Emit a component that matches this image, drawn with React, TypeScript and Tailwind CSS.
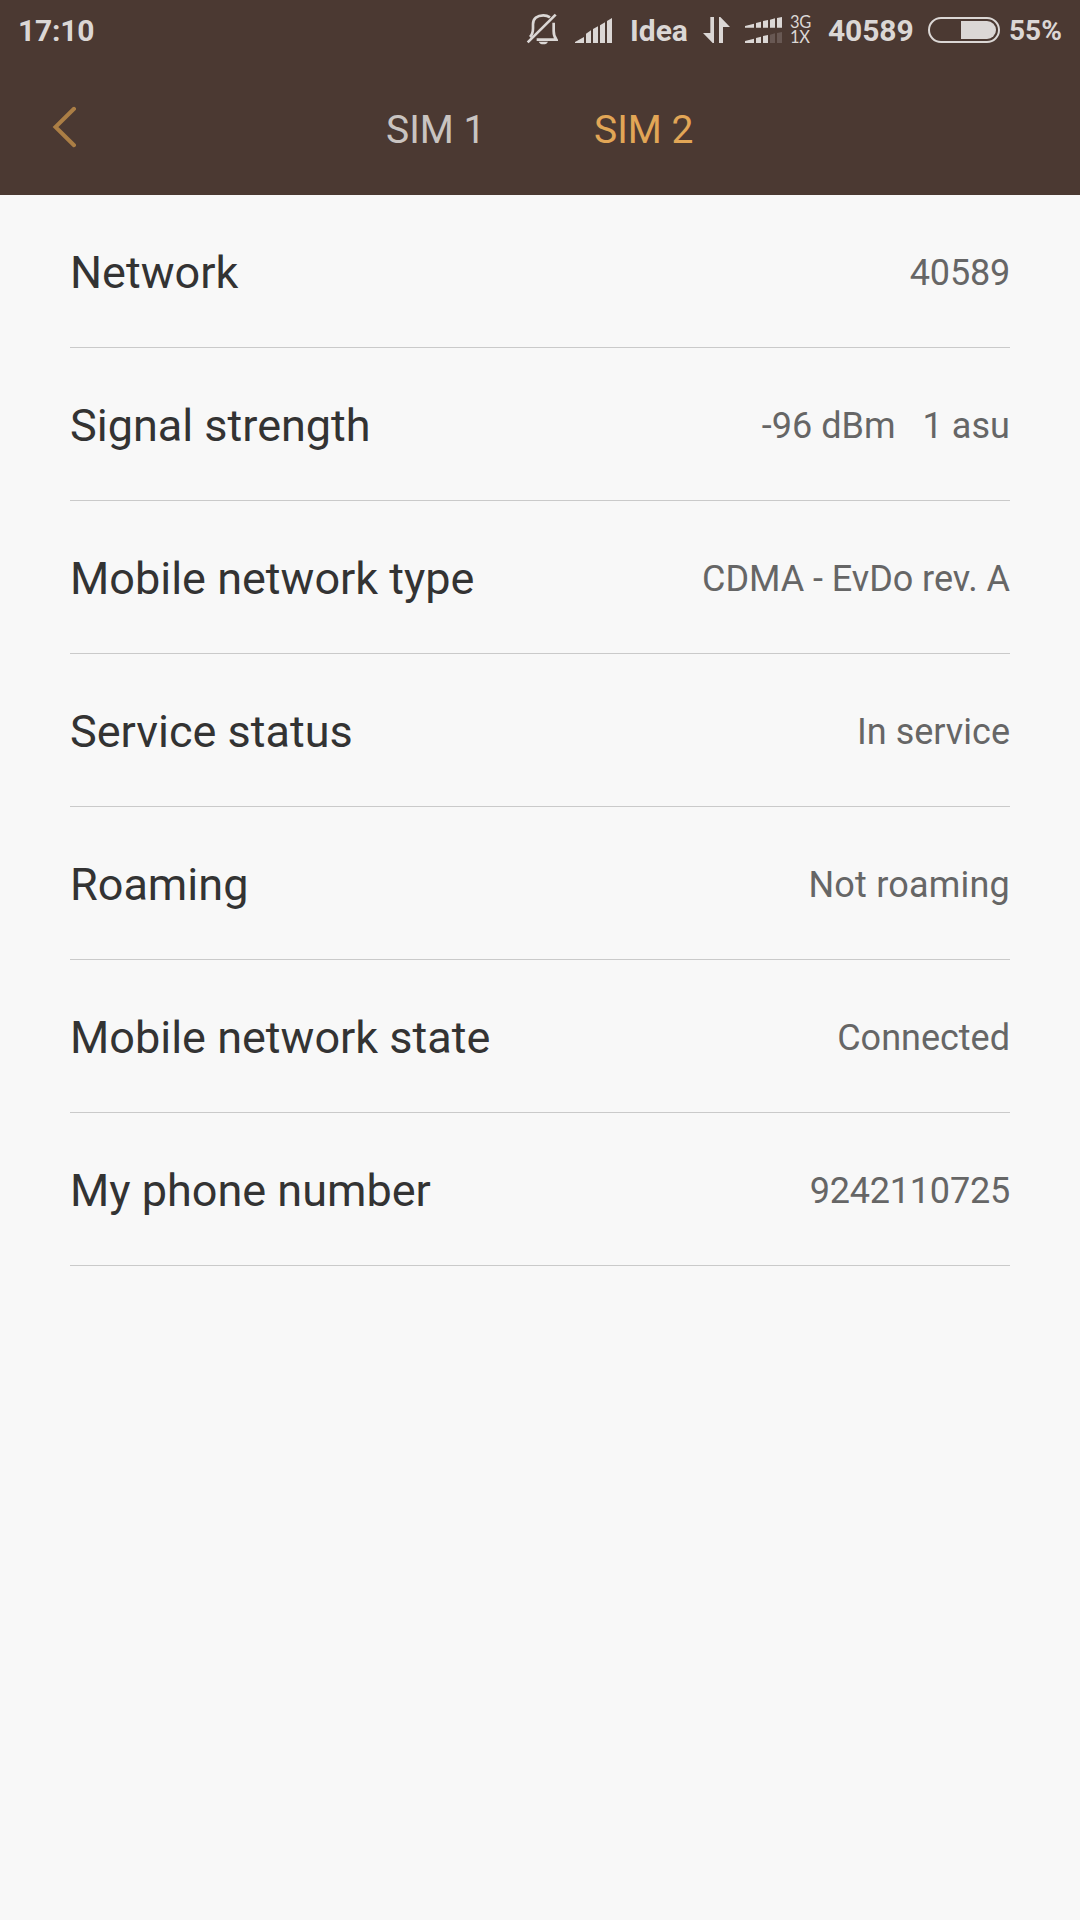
const rows = [
  { label: "Network", value: "40589", tracking: "tracking-[-0.2px]" },
  { label: "Signal strength", value: "-96 dBm   1 asu", tracking: "tracking-[0.05px]" },
  { label: "Mobile network type", value: "CDMA - EvDo rev. A", tracking: "tracking-[-0.05px]" },
  { label: "Service status", value: "In service", tracking: "tracking-normal" },
  { label: "Roaming", value: "Not roaming", tracking: "tracking-[0.2px]" },
  { label: "Mobile network state", value: "Connected", tracking: "tracking-normal" },
  { label: "My phone number", value: "9242110725", tracking: "tracking-[-0.2px]" },
]

function BellOffIcon() {
  return (
    <svg viewBox="0 0 96 102" className="mb-px ml-[432px] h-[34px] w-8" fill="none" stroke="currentColor" strokeWidth="8">
      <path d="M5 88 89 5" />
      <path d="M12 72C20 64 21 58 21 46V34C21 16 34 7 52 7C60 7 66 9 72 13" />
      <path d="M83 29V54C83 66 85 72 91 80H32" />
      <path d="M38 86H66C64 91 59 94 52 94S40 91 38 86Z" fill="currentColor" stroke="none" />
    </svg>
  )
}

function SignalIcon() {
  return (
    <svg viewBox="0 0 111 75" className="mt-px ml-[17px] h-[25px] w-[37px]" fill="currentColor">
      <path d="M0 75V72L27 57V75Z" />
      <path d="M33 75V47L48 37V75Z" />
      <path d="M54 75V33L69 25V75Z" />
      <path d="M75 75V22L90 13V75Z" />
      <path d="M96 75V9L111 0V75Z" />
    </svg>
  )
}

function DataIcon() {
  return (
    <svg viewBox="0 0 81 78" className="ml-[15px] h-[26px] w-[27px]" fill="currentColor">
      <path d="M22 0H33V78H29L0 48H22Z" />
      <path d="M48 78V0H52L81 30H60V78Z" />
    </svg>
  )
}

function DualSignalIcon() {
  return (
    <svg viewBox="0 0 111 78" className="ml-[15px] h-[26px] w-[37px]" fill="currentColor">
      <path d="M0 32V27L27 20V32ZM33 32V18L48 14V32ZM54 32V12L69 9V32ZM75 32V8L90 4V32ZM96 32V3L111 0V32Z" />
      <path d="M0 78V72L27 65V78ZM33 78V63L48 59V78ZM54 78V57L69 54V78Z" />
      <path d="M75 78V53L90 49V78ZM96 78V48L111 45V78Z" opacity=".2" />
    </svg>
  )
}

function StatusBar() {
  return (
    <div className="flex h-[60px] items-center text-[30px] font-bold text-[#dbd7d5]">
      <span className="ml-[18px] w-[76px] tracking-[-0.2px]">17:10</span>
      <BellOffIcon />
      <SignalIcon />
      <span className="ml-[18px] w-[58px]">Idea</span>
      <DataIcon />
      <DualSignalIcon />
      <div className="ml-2 w-[23px] font-[Lato] text-[16.5px] leading-[15px] font-normal tracking-[-0.3px]">
        <div>3G</div>
        <div>1X</div>
      </div>
      <span className="ml-[15px] w-[86px] tracking-[-0.1px]">40589</span>
      <div className="ml-[14px] flex h-[26px] w-[72px] justify-end rounded-full border-2 border-current p-[2px]">
        <div className="w-[35px] rounded-r-full bg-current" />
      </div>
      <span className="mt-px ml-[9px] text-[28px]">55%</span>
    </div>
  )
}

export default function App() {
  return (
    <div className="min-h-[1920px] w-[1080px] bg-[#f8f8f8] font-[Roboto,sans-serif]">
      <header className="h-[195px] bg-[#4b3932]">
        <StatusBar />
        <nav className="flex h-[135px] items-center pt-[6px] text-[39px]">
          <svg viewBox="0 0 24 42" className="mb-[7px] ml-[52px] h-[42px] w-6" fill="none" stroke="#ab7e45" strokeWidth="4" strokeLinecap="round">
            <path d="M22 2.8 3.5 21 22 39.2" />
          </svg>
          <span className="ml-[310px] w-[208px] text-[#c9c4c1]">SIM 1</span>
          <span className="text-[#e2a656]">SIM 2</span>
        </nav>
      </header>

      <main className="px-[70px]">
        {rows.map((row) => (
          <div key={row.label} className="flex h-[153px] items-center justify-between border-b border-[#cacaca] pt-[3px]">
            <span className="text-[45px] text-[#333333]">{row.label}</span>
            <span className={`text-[36px] whitespace-pre text-[#666666] ${row.tracking}`}>{row.value}</span>
          </div>
        ))}
      </main>
    </div>
  )
}
